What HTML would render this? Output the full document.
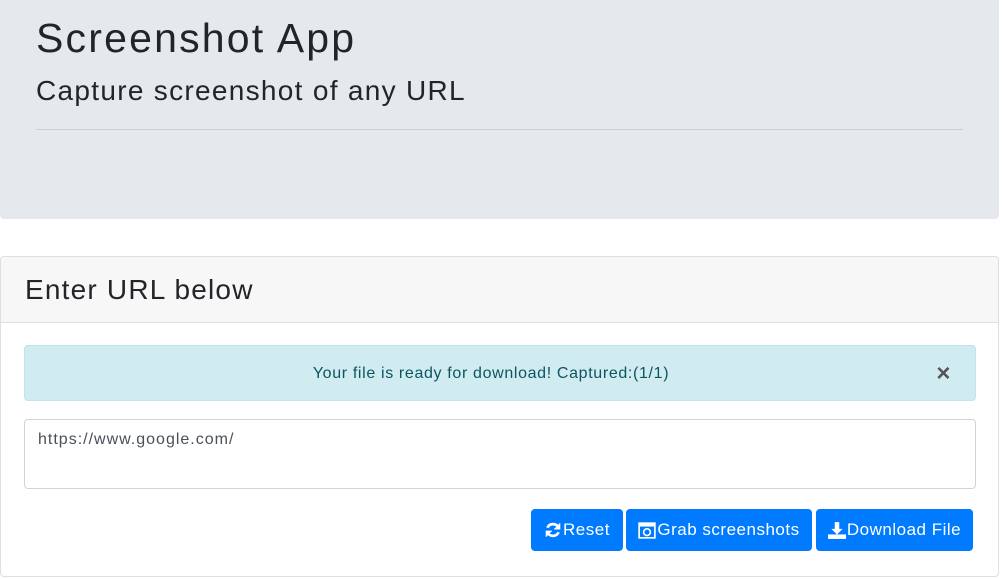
<!DOCTYPE html>
<html><head><style>
body{margin:0;font-family:"Liberation Sans",sans-serif;color:#212529;background:#fff;width:1002px;height:579px;overflow:hidden;position:relative}
.jumbo{position:absolute;left:0;top:0;width:999px;height:219px;background:#e5e8ec;border-radius:0 0 4px 4px}
h1{position:absolute;left:36px;top:14px;margin:0;font-size:41px;font-weight:400;line-height:1.2;letter-spacing:2.2px}
h2{position:absolute;left:36px;top:74px;margin:0;font-size:28px;font-weight:400;line-height:1.2;letter-spacing:1.3px}
.hr{position:absolute;left:36px;top:129px;width:927px;border-top:1px solid #ccced1}
.card{position:absolute;left:0;top:256px;width:997px;height:319px;border:1px solid #dfdfdf;border-radius:4px}
.ch{height:65px;background:#f7f7f7;border-bottom:1px solid #dfdfdf;font-size:28px;padding-left:24px;line-height:66px;border-radius:4px 4px 0 0;letter-spacing:1.2px}
.alert{position:absolute;left:23px;top:88px;width:932px;padding-right:18px;height:54px;background:#d1ecf1;border:1px solid #bee5eb;border-radius:4px;color:#0c5460;text-align:center;line-height:55px;font-size:16px;letter-spacing:0.65px}
.x{position:absolute;right:24px;top:0;font-size:24px;font-weight:bold;color:#555}
.ta{position:absolute;left:23px;top:162px;width:952px;height:70px;border:1px solid #ced4da;border-radius:4px;font-size:16px;color:#495057;padding:11px 13px;box-sizing:border-box;letter-spacing:1px}
.btn{position:absolute;top:252px;height:42px;background:#007bff;color:#fff;border-radius:4px;font-size:17px;line-height:42px;text-align:center;display:flex;align-items:center;justify-content:center;gap:1px;letter-spacing:0.5px}
</style></head><body>
<div class="jumbo"><h1>Screenshot App</h1><h2>Capture screenshot of any URL</h2><div class="hr"></div></div>
<div class="card">
<div class="ch">Enter URL below</div>
<div class="alert">Your file is ready for download! Captured:(1/1)<span class="x">×</span></div>
<div class="ta">https://www.google.com/</div>
<div class="btn" style="left:530px;width:92px"><svg width="18" height="18" viewBox="0 0 16 16" fill="none" stroke="#fff" stroke-width="2.4"><path d="M13 6A5.5 5.5 0 0 0 3 6M3 10a5.5 5.5 0 0 0 10 0"/><path d="M14 2v5h-5M2 14V9h5" fill="#fff" stroke-width="1"/></svg>Reset</div>
<div class="btn" style="left:625px;width:186px"><svg width="18" height="17" viewBox="0 0 16 15"><rect x="1" y="1" width="14" height="13" fill="none" stroke="#fff" stroke-width="1.5"/><rect x="1" y="1" width="14" height="3" fill="#fff"/><circle cx="8" cy="9" r="3" fill="none" stroke="#fff" stroke-width="1.5"/></svg>Grab screenshots</div>
<div class="btn" style="left:815px;width:157px"><svg width="18" height="17" viewBox="0 0 16 15" fill="#fff"><path d="M6 0h4v6h3l-5 5-5-5h3z"/><rect x="0" y="11" width="16" height="4"/></svg>Download File</div>
</div>
</body></html>
